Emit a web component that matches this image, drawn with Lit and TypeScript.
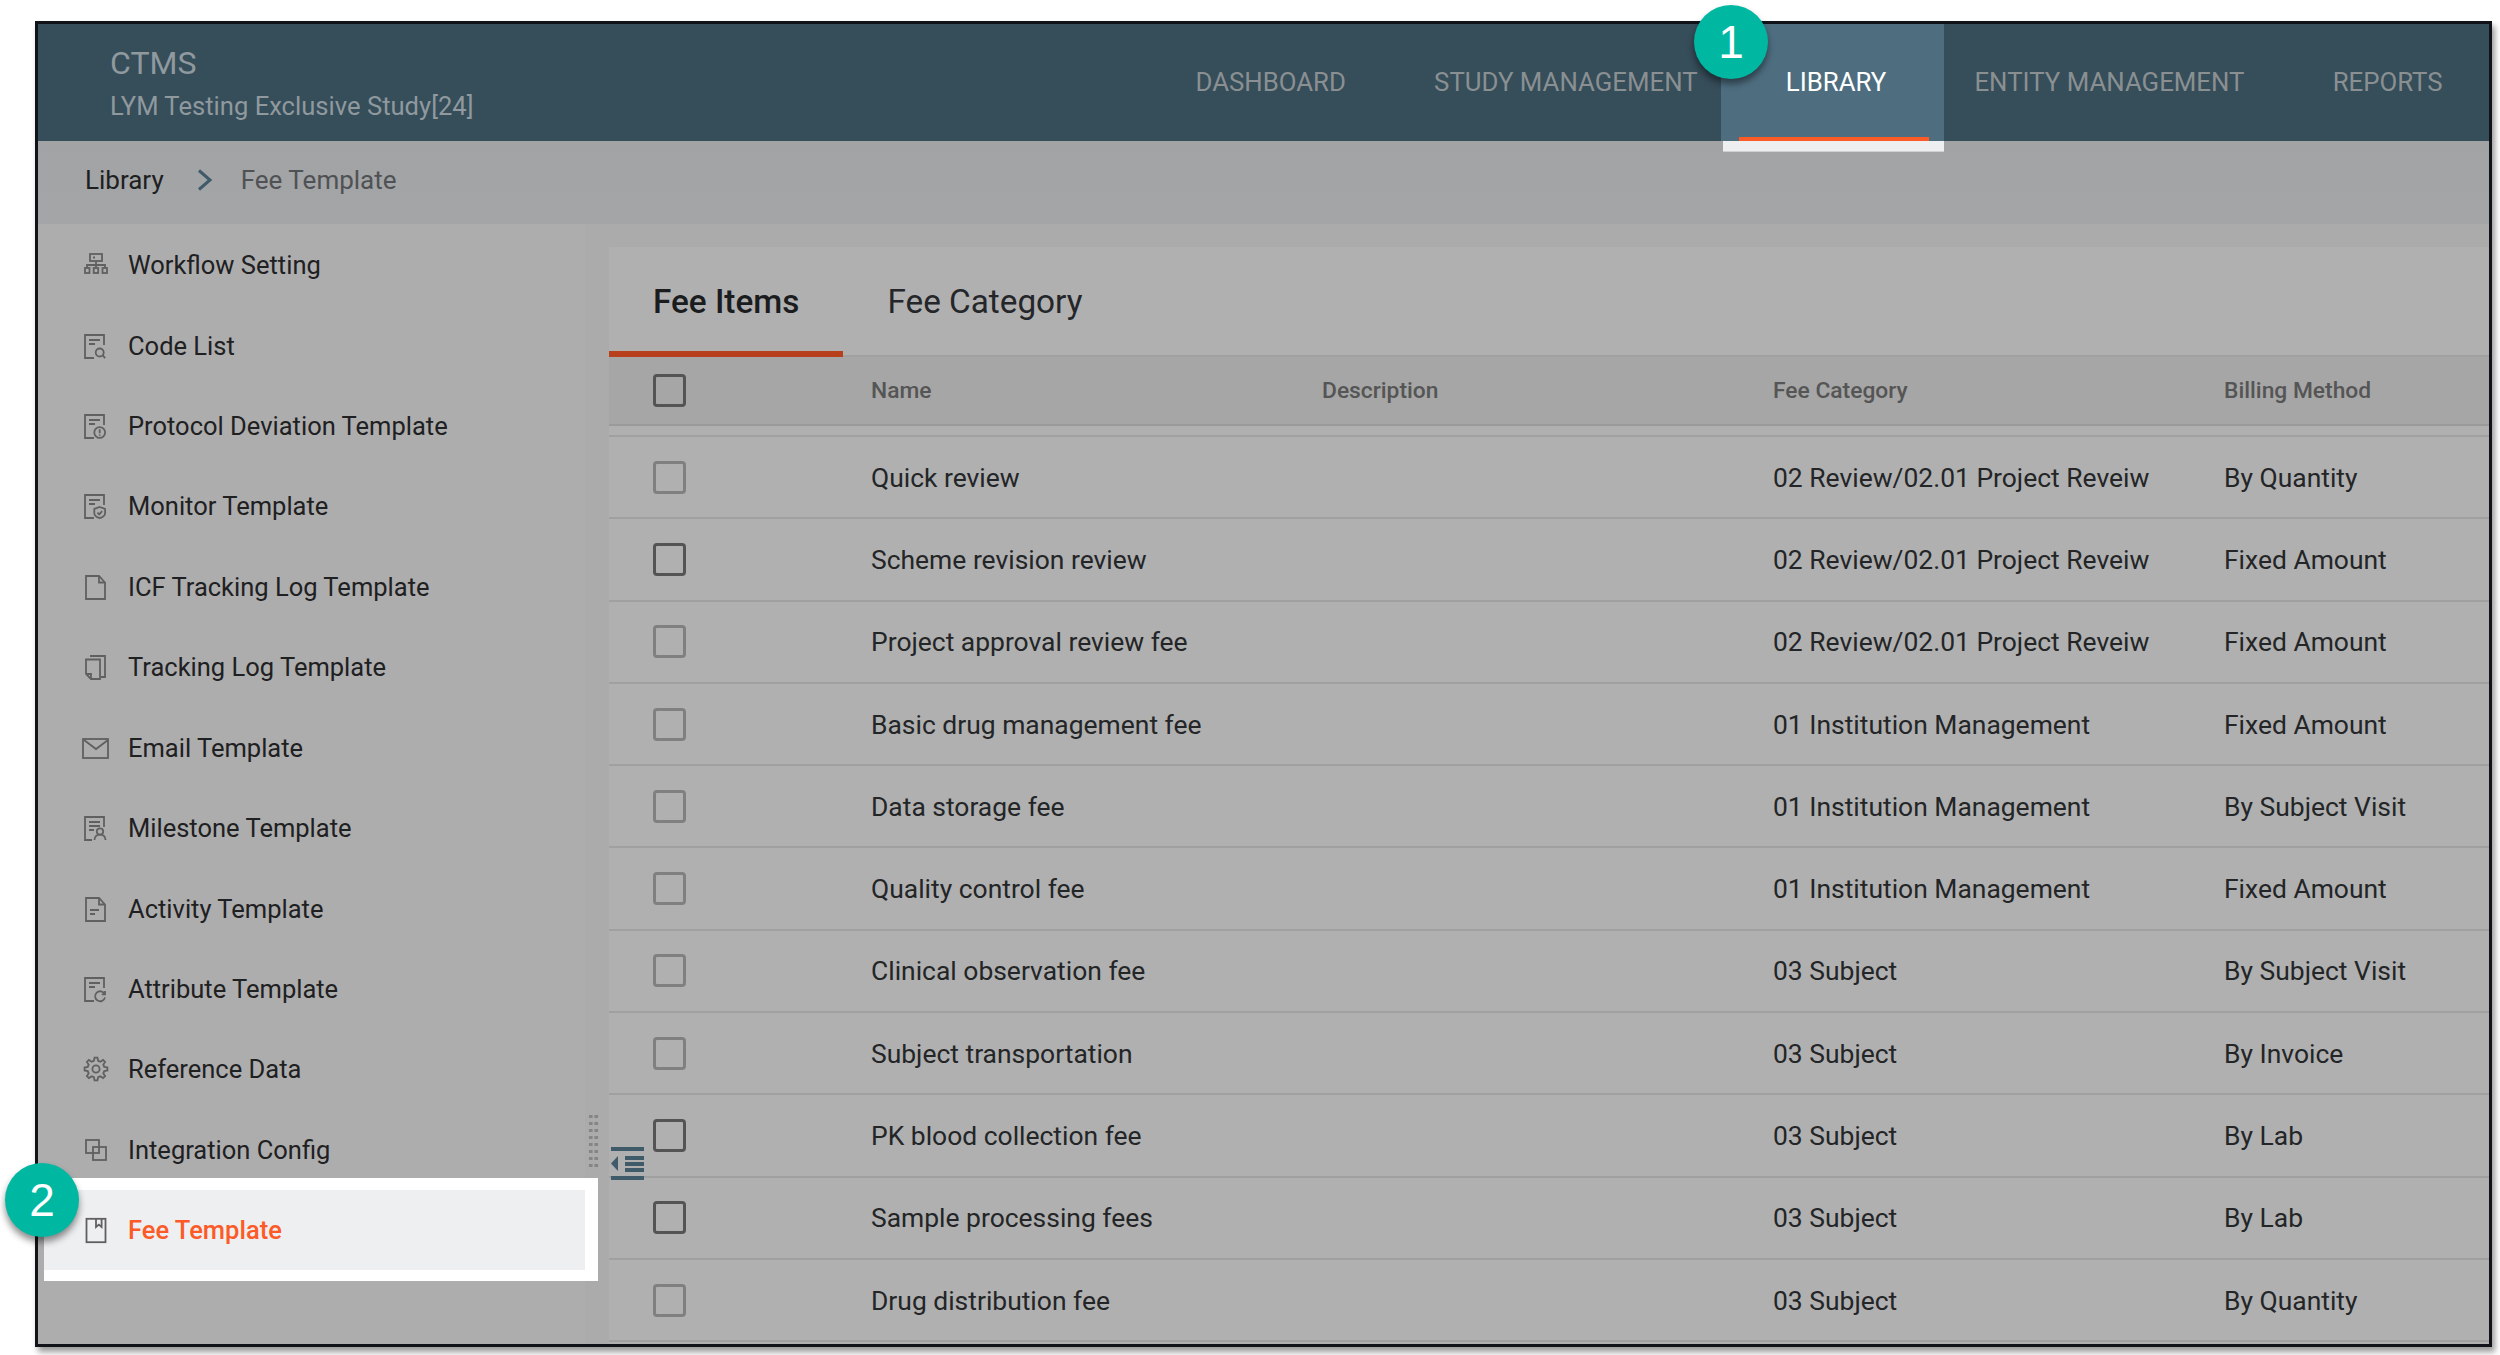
import { LitElement, css, html, svg } from 'lit'
import { customElement } from 'lit/decorators.js'

const docBody = svg`<path d="M20 11V1H1v23h9"/><path d="M5 6h11M5 10h6"/>`

function gearPath() {
    const pts: string[] = []
    const teeth = 8
    for (let i = 0; i < teeth; i++) {
        const a = (i / teeth) * Math.PI * 2
        const step = (Math.PI * 2) / teeth
        const at = (r: number, t: number) => `${(12 + r * Math.cos(t)).toFixed(2)} ${(12 + r * Math.sin(t)).toFixed(2)}`
        pts.push(at(8.5, a - step * 0.32), at(11.5, a - step * 0.16), at(11.5, a + step * 0.16), at(8.5, a + step * 0.32))
    }
    return 'M' + pts.join('L') + 'Z'
}

const icons = {
    workflow: svg`<rect x="6" y="1" width="12" height="7"/><path d="M9 4.5h2M12 8v4M3 15v-3h18v3M12 12v3"/><rect x="1" y="15" width="4.5" height="5"/><rect x="9.7" y="15" width="4.5" height="5"/><rect x="18.5" y="15" width="4.5" height="5"/>`,
    search: svg`${docBody}<circle cx="15.7" cy="18.5" r="4"/><path d="M18.6 21.4l2.6 2.6"/>`,
    alert: svg`${docBody}<circle cx="15.7" cy="18.5" r="5.4"/><path d="M15.7 15.2v4M15.7 20.4v1.4"/>`,
    shield: svg`${docBody}<path d="M15.7 13l5.4 2v4.2c0 2.4-2.6 4-5.4 5-2.8-1-5.4-2.6-5.4-5V15z"/><path d="M13.4 18.6l1.8 1.8 3-3.2"/>`,
    file: svg`<path d="M2 1h13l6 6.5V24H2z"/><path d="M15 1v6.5h6"/>`,
    copies: svg`<path d="M6 1h15v21h-4"/><path d="M2 4.5h14V24H7l-5-5z"/><path d="M2 19h5v5"/>`,
    mail: svg`<rect x="-1" y="3" width="25" height="19"/><path d="M0 4l12 9 12-9"/>`,
    person: svg`<path d="M20 11V1H1v23h7"/><path d="M5 6h11M5 10h11M5 14h5"/><circle cx="16" cy="15.5" r="3.2"/><path d="M10.5 24c0-3.4 2.4-5.4 5.5-5.4s5.5 2 5.5 5.4"/>`,
    activity: svg`<path d="M2 1h13l6 6.5V24H2z"/><path d="M15 1v6.5h6M6 13h9M6 17h5"/>`,
    refresh: svg`${docBody}<path d="M20.6 17a5 5 0 1 0 .4 3.4"/><path d="M21 14v3.4h-3.2"/>`,
    gear: svg`<path d=${gearPath()}/><circle cx="12" cy="12" r="3.6"/>`,
    squares: svg`<rect x="2" y="2" width="13" height="13"/><rect x="9" y="9" width="13" height="13"/>`,
    bookmark: svg`<rect x="2.5" y="0.8" width="19" height="23.4"/><path d="M12 1v8l2.8-2.4L17.6 9V1"/>`,
}

type IconName = keyof typeof icons

const menu: { label: string; icon: IconName }[] = [
    { label: 'Workflow Setting', icon: 'workflow' },
    { label: 'Code List', icon: 'search' },
    { label: 'Protocol Deviation Template', icon: 'alert' },
    { label: 'Monitor Template', icon: 'shield' },
    { label: 'ICF Tracking Log Template', icon: 'file' },
    { label: 'Tracking Log Template', icon: 'copies' },
    { label: 'Email Template', icon: 'mail' },
    { label: 'Milestone Template', icon: 'person' },
    { label: 'Activity Template', icon: 'activity' },
    { label: 'Attribute Template', icon: 'refresh' },
    { label: 'Reference Data', icon: 'gear' },
    { label: 'Integration Config', icon: 'squares' },
    { label: 'Fee Template', icon: 'bookmark' },
]

const rows = [
    ['Quick review', '02 Review/02.01 Project Reveiw', 'By Quantity', false],
    ['Scheme revision review', '02 Review/02.01 Project Reveiw', 'Fixed Amount', true],
    ['Project approval review fee', '02 Review/02.01 Project Reveiw', 'Fixed Amount', false],
    ['Basic drug management fee', '01 Institution Management', 'Fixed Amount', false],
    ['Data storage fee', '01 Institution Management', 'By Subject Visit', false],
    ['Quality control fee', '01 Institution Management', 'Fixed Amount', false],
    ['Clinical observation fee', '03 Subject', 'By Subject Visit', false],
    ['Subject transportation', '03 Subject', 'By Invoice', false],
    ['PK blood collection fee', '03 Subject', 'By Lab', true],
    ['Sample processing fees', '03 Subject', 'By Lab', true],
    ['Drug distribution fee', '03 Subject', 'By Quantity', false],
] as const

const nav = ['DASHBOARD', 'STUDY MANAGEMENT', 'LIBRARY', 'ENTITY MANAGEMENT', 'REPORTS']

@customElement('app-root')
export class AppRoot extends LitElement {
    static styles = css`
        :host {
            display: block;
            width: 2500px;
            height: 1355px;
            background: #fff;
            font-family: Roboto, "Liberation Sans", sans-serif;
            overflow: hidden;
        }

        .frame {
            position: relative;
            box-sizing: border-box;
            width: 2457px;
            height: 1326px;
            margin: 21px 0 0 35px;
            border: 3px solid #101418;
            display: flex;
            flex-direction: column;
            background: #adadad;
            box-shadow: 3px 5px 6px rgba(0, 0, 0, 0.4);
        }

        .header {
            height: 117px;
            flex: none;
            display: flex;
            align-items: center;
            justify-content: space-between;
            padding: 0 46.4px 0 72px;
            background: #364d5a;
        }

        .title {
            display: flex;
            flex-direction: column;
            gap: 10px;
            color: #8f999e;
        }

        .title .app {
            font-size: 32px;
            line-height: 36px;
        }

        .title .study {
            font-size: 25.6px;
            line-height: 30px;
        }

        nav {
            display: flex;
            gap: 88.2px;
            align-self: stretch;
        }

        nav span {
            position: relative;
            z-index: 0;
            display: flex;
            align-items: center;
            padding-bottom: 2px;
            font-size: 25.8px;
            color: #8a9092;
            white-space: nowrap;
        }

        nav span.active {
            color: #fff;
        }

        nav span.active::before {
            content: "";
            position: absolute;
            z-index: -1;
            inset: 0 -58px 0 -64.5px;
            background: #4e6e80;
        }

        nav span.active::after {
            content: "";
            position: absolute;
            height: 4px;
            bottom: 0;
            left: -46.5px;
            right: -43px;
            background: #fc5a27;
        }

        .nav-tail {
            position: absolute;
            left: 1685px;
            top: 117px;
            width: 221px;
            height: 11px;
            background: #eeeff1;
            border-bottom: 1px solid #d0d0d0;
            box-sizing: border-box;
        }

        .crumbs {
            height: 83px;
            flex: none;
            box-sizing: border-box;
            display: flex;
            align-items: center;
            padding: 0 0 5px 47px;
            font-size: 26px;
            background: linear-gradient(#a2a3a5, #a4a5a7);
            color: #4f5254;
        }

        .crumbs .root {
            color: #1d1f21;
        }

        .crumbs svg {
            width: 16px;
            height: 22px;
            margin: 0 28px 0 33px;
            fill: none;
            stroke: #3f5a69;
            stroke-width: 3;
        }

        .body {
            flex: 1;
            min-height: 0;
            display: flex;
            background: #ababab;
        }

        .sidebar {
            flex: none;
            width: 547px;
            box-sizing: border-box;
            padding-top: 1px;
            background: #adadad;
        }

        .item {
            position: relative;
            z-index: 0;
            height: 80.43px;
            display: flex;
            align-items: center;
            gap: 20px;
            padding-left: 46px;
            font-size: 25.5px;
            color: #1e2022;
        }

        .item svg {
            width: 24px;
            height: 24px;
            flex: none;
            overflow: visible;
            fill: none;
            stroke: #606060;
            stroke-width: 1.8;
        }

        .item.active {
            color: #fc5a27;
            font-weight: 500;
        }

        .item.active::before {
            content: "";
            position: absolute;
            z-index: -2;
            inset: -12px -13px -11px 6px;
            background: #fff;
        }

        .item.active::after {
            content: "";
            position: absolute;
            z-index: -1;
            inset: 0 0 0 6px;
            background: #eeeff1;
        }

        .gutter {
            position: relative;
            flex: none;
            width: 24px;
        }

        .grip {
            position: absolute;
            left: 3px;
            top: 889px;
            width: 11px;
            height: 56px;
            background-image: radial-gradient(circle, #858585 1.8px, transparent 2px);
            background-size: 5.5px 7px;
        }

        .collapse {
            position: absolute;
            left: 26px;
            top: 923px;
            width: 33px;
            height: 33px;
            z-index: 2;
            fill: #3f5a69;
        }

        .panel {
            flex: 1;
            min-width: 0;
            margin-top: 23px;
            background: #b0b0b0;
        }

        .tabs {
            height: 110px;
            box-sizing: border-box;
            display: flex;
            border-bottom: 2px solid #a0a0a0;
        }

        .tab {
            display: flex;
            align-items: center;
            box-sizing: border-box;
            height: 110px;
            padding: 4px 44px 0;
            border-bottom: 6px solid transparent;
            font-size: 33.3px;
            color: #24262a;
        }

        .tab.active {
            font-weight: 500;
            border-bottom-color: #b83f1c;
            color: #1a1c1e;
        }

        .grid {
            display: grid;
            grid-template-columns: 262px 451px 451px 451px 1fr;
            align-items: center;
        }

        .head {
            height: 69px;
            box-sizing: border-box;
            background: #a6a6a6;
            border-bottom: 2px solid #9a9a9a;
            font-size: 22.8px;
            font-weight: 500;
            color: #555;
            margin-bottom: 9px;
        }

        .row {
            height: 82.3px;
            box-sizing: border-box;
            border-top: 2px solid #a0a0a0;
            font-size: 26.45px;
            color: #232527;
        }

        .row:last-child {
            height: 84.3px;
            border-bottom: 2px solid #a0a0a0;
        }

        .box {
            display: block;
            box-sizing: border-box;
            width: 33px;
            height: 33px;
            margin-left: 44px;
            border: 3px solid #808080;
            border-radius: 4px;
        }

        .box.dark {
            border-color: #545454;
        }

        .badge {
            position: absolute;
            z-index: 5;
            width: 74px;
            height: 74px;
            display: flex;
            align-items: center;
            justify-content: center;
            border-radius: 50%;
            background: #00b8a2;
            color: #fff;
            font-family: "Liberation Sans", Arial, sans-serif;
            font-size: 46px;
            box-shadow: 0 5px 7px rgba(0, 0, 0, 0.45);
        }

        .badge.one {
            left: 1656px;
            top: -19px;
        }

        .badge.two {
            left: -33px;
            top: 1139px;
        }
    `

    render() {
        return html`
            <div class="frame">
                <div class="header">
                    <div class="title">
                        <span class="app">CTMS</span>
                        <span class="study">LYM Testing Exclusive Study[24]</span>
                    </div>
                    <nav>
                        ${nav.map((n) => html`<span class=${n === 'LIBRARY' ? 'active' : ''}>${n}</span>`)}
                    </nav>
                </div>
                <div class="nav-tail"></div>
                <div class="crumbs">
                    <span class="root">Library</span>
                    <svg viewBox="0 0 16 22"><path d="M2 1.5L13 11 2 20.5"/></svg>
                    <span>Fee Template</span>
                </div>
                <div class="body">
                    <div class="sidebar">
                        ${menu.map((m) => html`
                            <div class="item ${m.label === 'Fee Template' ? 'active' : ''}">
                                <svg viewBox="0 0 24 24">${icons[m.icon]}</svg>
                                <span>${m.label}</span>
                            </div>
                        `)}
                    </div>
                    <div class="gutter">
                        <div class="grip"></div>
                        <svg class="collapse" viewBox="0 0 33 33">
                            <rect x="0" y="0" width="33" height="4"/>
                            <rect x="0" y="29" width="33" height="4"/>
                            <rect x="14" y="9" width="19" height="4"/>
                            <rect x="14" y="15" width="19" height="4"/>
                            <rect x="14" y="21" width="19" height="4"/>
                            <path d="M0 16.5L7 9v15z"/>
                        </svg>
                    </div>
                    <div class="panel">
                        <div class="tabs">
                            <div class="tab active">Fee Items</div>
                            <div class="tab">Fee Category</div>
                        </div>
                        <div class="grid head">
                            <span class="box dark"></span>
                            <span>Name</span>
                            <span>Description</span>
                            <span>Fee Category</span>
                            <span>Billing Method</span>
                        </div>
                        ${rows.map((r) => html`
                            <div class="grid row">
                                <span class="box ${r[3] ? 'dark' : ''}"></span>
                                <span>${r[0]}</span>
                                <span></span>
                                <span>${r[1]}</span>
                                <span>${r[2]}</span>
                            </div>
                        `)}
                    </div>
                </div>
                <div class="badge one">1</div>
                <div class="badge two">2</div>
            </div>
        `
    }
}
